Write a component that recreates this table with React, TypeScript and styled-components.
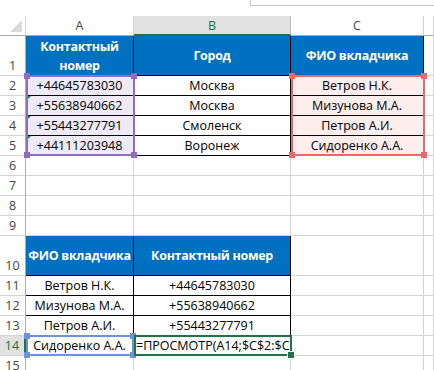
import React from "react";
import styled, { createGlobalStyle, css } from "styled-components";

const GRID = "#d4d4d4";
const HEAD_LINE = "#ababab";
const TABLE_BLUE = "#0070c0";
const ACTIVE = "#217346";

const GlobalStyle = createGlobalStyle`
  html, body {
    margin: 0;
    padding: 0;
    background: #fff;
  }
  body {
    font-family: "Open Sans", "Liberation Sans", sans-serif;
    overflow: hidden;
  }
`;

type Kind = "plain" | "head" | "data";

type CellDef = {
  text?: string;
  kind?: Kind;
  left?: boolean;
  tint?: string;
  flag?: boolean;
};

type RowDef = { n: number; tall?: boolean; active?: boolean; cells: CellDef[] };

const LAV = "#efeaf7";
const PINK = "#fdeded";

const head = (text: string): CellDef => ({ text, kind: "head" });
const data = (text: string, extra: Partial<CellDef> = {}): CellDef => ({
  text,
  kind: "data",
  ...extra,
});

const rows: RowDef[] = [
  {
    n: 1,
    tall: true,
    cells: [head("Контактный номер"), head("Город"), head("ФИО вкладчика")],
  },
  {
    n: 2,
    cells: [
      data("+44645783030", { tint: LAV }),
      data("Москва"),
      data("Ветров Н.К.", { tint: PINK }),
    ],
  },
  {
    n: 3,
    cells: [
      data("+55638940662", { tint: LAV, flag: true }),
      data("Москва"),
      data("Мизунова М.А.", { tint: PINK }),
    ],
  },
  {
    n: 4,
    cells: [
      data("+55443277791", { tint: LAV, flag: true }),
      data("Смоленск"),
      data("Петров А.И.", { tint: PINK }),
    ],
  },
  {
    n: 5,
    cells: [
      data("+44111203948", { tint: LAV, flag: true }),
      data("Воронеж"),
      data("Сидоренко А.А.", { tint: PINK }),
    ],
  },
  { n: 6, cells: [] },
  { n: 7, cells: [] },
  { n: 8, cells: [] },
  { n: 9, cells: [] },
  { n: 10, tall: true, cells: [head("ФИО вкладчика"), head("Контактный номер")] },
  { n: 11, cells: [data("Ветров Н.К."), data("+44645783030")] },
  { n: 12, cells: [data("Мизунова М.А."), data("+55638940662")] },
  { n: 13, cells: [data("Петров А.И."), data("+55443277791")] },
  {
    n: 14,
    active: true,
    cells: [
      data("Сидоренко А.А."),
      data("=ПРОСМОТР(A14;$C$2:$C$5;$A$2:$A$5)", { left: true }),
    ],
  },
  { n: 15, cells: [] },
];

const columns = ["A", "B", "C", ""];
const activeColumn = "B";

const TopStrip = styled.div`
  display: grid;
  grid-template-columns: 250px 1fr;
  height: 16px;
`;

const FormulaBox = styled.div`
  grid-column: 2;
  height: 6px;
  box-sizing: border-box;
  border-left: 1px solid #c6c6c6;
  border-bottom: 1px solid #c6c6c6;
`;

const sheetTracks = css`
  display: grid;
  grid-template-columns: 26px 108px 157px 133px 1fr;
  grid-template-rows: 20px 40px repeat(8, 20px) 40px repeat(5, 20px);
`;

const Sheet = styled.div`
  position: relative;
  ${sheetTracks}
  font-size: 12.5px;
  line-height: 16px;
`;

// same tracks as the sheet, laid over it for the reference frames
const FrameLayer = styled.div`
  position: absolute;
  inset: 0;
  ${sheetTracks}
  pointer-events: none;
`;

const Corner = styled.div`
  position: relative;
  box-sizing: border-box;
  border-right: 1px solid ${GRID};
  border-bottom: 1px solid ${HEAD_LINE};

  &::after {
    content: "";
    position: absolute;
    right: 3px;
    bottom: 3px;
    width: 12px;
    height: 12px;
    background: #dadada;
    clip-path: polygon(100% 0, 100% 100%, 0 100%);
  }
`;

const ColHead = styled.div<{ $active?: boolean }>`
  box-sizing: border-box;
  display: flex;
  align-items: center;
  justify-content: center;
  padding-top: 1px;
  color: #444;
  border-right: 1px solid ${GRID};
  border-bottom: 1px solid ${HEAD_LINE};

  ${(p) =>
    p.$active &&
    css`
      background: #e1e1e1;
      color: ${ACTIVE};
      border-right-color: #bcbcbc;
      border-bottom: 2px solid ${ACTIVE};
    `}
`;

const RowHead = styled.div<{ $active?: boolean }>`
  box-sizing: border-box;
  display: flex;
  align-items: flex-end;
  justify-content: center;
  padding-bottom: 1px;
  color: #444;
  border-right: 1px solid ${HEAD_LINE};
  border-bottom: 1px solid ${GRID};

  ${(p) =>
    p.$active &&
    css`
      background: #e1e1e1;
      color: ${ACTIVE};
      border-right: 2px solid ${ACTIVE};
    `}
`;

const Cell = styled.div<{ $kind: Kind; $left?: boolean; $tint?: string; $flag?: boolean }>`
  position: relative;
  box-sizing: border-box;
  display: flex;
  align-items: flex-end;
  justify-content: ${(p) => (p.$left ? "flex-start" : "center")};
  padding: 0 2px 1px;
  min-width: 0;
  overflow: hidden;
  white-space: nowrap;
  color: #000;
  background: ${(p) => p.$tint ?? "transparent"};
  border-right: 1px solid ${GRID};
  border-bottom: 1px solid ${GRID};

  ${(p) =>
    p.$kind === "data" &&
    css`
      border-color: #000;
    `}

  ${(p) =>
    p.$kind === "head" &&
    css`
      align-items: center;
      padding: 0 2px;
      background: ${TABLE_BLUE};
      color: #fff;
      font-weight: 700;
      letter-spacing: -0.3px;
      line-height: 19px;
      text-align: center;
      white-space: normal;
      border-color: #000;
    `}

  ${(p) =>
    p.$flag &&
    css`
      &::before {
        content: "";
        position: absolute;
        left: 0;
        top: 0;
        border-top: 5px solid #1e8a44;
        border-right: 5px solid transparent;
      }
    `}
`;

// reference frames drawn over the cells while the formula is being edited
const RefFrame = styled.div<{ $area: string; $color: string; $tight?: boolean }>`
  grid-area: ${(p) => p.$area};
  position: relative;
  margin: -1px ${(p) => (p.$tight ? "0" : "-1px")} 0 0;
  border: 2px solid ${(p) => p.$color};
`;

const Handle = styled.span<{ $color: string; $x: "left" | "right"; $y: "top" | "bottom" }>`
  position: absolute;
  ${(p) => p.$x}: -4px;
  ${(p) => p.$y}: -4px;
  width: 6px;
  height: 6px;
  background: ${(p) => p.$color};
`;

const FillHandle = styled.span`
  position: absolute;
  right: -5px;
  bottom: -5px;
  width: 6px;
  height: 6px;
  background: ${ACTIVE};
  border: 1px solid #fff;
`;

function Frame({ area, color, tight }: { area: string; color: string; tight?: boolean }) {
  return (
    <RefFrame $area={area} $color={color} $tight={tight}>
      <Handle $color={color} $x="left" $y="top" />
      <Handle $color={color} $x="right" $y="top" />
      <Handle $color={color} $x="left" $y="bottom" />
      <Handle $color={color} $x="right" $y="bottom" />
    </RefFrame>
  );
}

export default function App() {
  return (
    <>
      <GlobalStyle />
      <TopStrip>
        <FormulaBox />
      </TopStrip>
      <Sheet>
        <Corner />
        {columns.map((c, i) => (
          <ColHead key={i} $active={c === activeColumn}>
            {c}
          </ColHead>
        ))}
        {rows.map((row) => (
          <React.Fragment key={row.n}>
            <RowHead $active={row.active}>{row.n}</RowHead>
            {columns.map((_, i) => {
              const cell = row.cells[i] ?? {};
              return (
                <Cell
                  key={i}
                  $kind={cell.kind ?? "plain"}
                  $left={cell.left}
                  $tint={cell.tint}
                  $flag={cell.flag}
                >
                  {cell.text}
                </Cell>
              );
            })}
          </React.Fragment>
        ))}

        <FrameLayer>
          <Frame area="3 / 2 / 7 / 3" color="#8e6cc4" />
          <Frame area="3 / 4 / 7 / 5" color="#e8686c" />
          <Frame area="15 / 2 / 16 / 3" color="#6b93dc" tight />
          <RefFrame $area="15 / 3 / 16 / 4" $color={ACTIVE}>
            <FillHandle />
          </RefFrame>
        </FrameLayer>
      </Sheet>
    </>
  );
}
